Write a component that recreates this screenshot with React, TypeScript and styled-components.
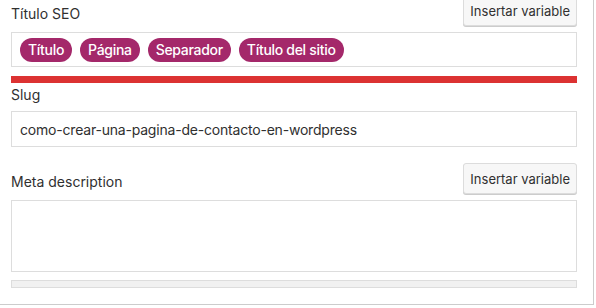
import React from "react";
import styled, { createGlobalStyle } from "styled-components";

const Global = createGlobalStyle`
  html, body { margin: 0; padding: 0; background: #fff; }
  body { font-family: Inter, "Open Sans", "Liberation Sans", sans-serif; color: #303030; }
  * { box-sizing: border-box; }
`;

const Panel = styled.div`
  width: 594px;
  height: 310px;
  margin-top: -5px;
  padding: 0 16px 0 11px;
  border-right: 1px solid #ccc;
  border-bottom: 1px solid #ccc;
  display: flex;
  flex-direction: column;
`;

const FieldHeader = styled.div<{ $gap?: number }>`
  display: flex;
  align-items: center;
  justify-content: space-between;
  margin-top: ${(p) => p.$gap ?? 0}px;
`;

const Label = styled.label`
  font-size: 14px;
  line-height: 20px;
  padding-top: 6px;
  color: #303030;
`;

const VarButton = styled.button`
  height: 31px;
  padding: 0 6px;
  font-family: inherit;
  font-size: 13px;
  color: #303030;
  background: #f7f7f7;
  border: 1px solid #dcdcdc;
  border-radius: 3px;
  box-shadow: 0 1px 0 #ccc;
`;

const TagBox = styled.div`
  margin-top: 6px;
  height: 35px;
  border: 1px solid #ddd;
  padding: 5px 8px;
  display: flex;
  gap: 8px;
  align-items: center;
`;

const Pill = styled.span`
  height: 24px;
  line-height: 24px;
  padding: 0 8px;
  border-radius: 12px;
  background: #a4286a;
  color: #fff;
  font-size: 14px;
  font-weight: 500;
  letter-spacing: -0.3px;
`;

const Bar = styled.div<{ $color: string; $border: string; $gap: number; $h: number }>`
  margin-top: ${(p) => p.$gap}px;
  height: ${(p) => p.$h}px;
  background: ${(p) => p.$color};
  border: 1px solid ${(p) => p.$border};
`;

const TextInput = styled.div`
  height: 36px;
  border: 1px solid #ddd;
  padding: 0 8px;
  display: flex;
  align-items: center;
  font-size: 14px;
  letter-spacing: -0.2px;
  color: #303030;
`;

const SlugLabel = styled(Label)`
  margin-top: 2px;
  padding-top: 0;
  margin-bottom: 6px;
`;

const TextArea = styled.div`
  margin-top: 6px;
  height: 72px;
  border: 1px solid #ddd;
`;

export default function App() {
  return (
    <>
      <Global />
      <Panel>
        <FieldHeader>
          <Label>Título SEO</Label>
          <VarButton>Insertar variable</VarButton>
        </FieldHeader>
        <TagBox>
          <Pill>Título</Pill>
          <Pill>Página</Pill>
          <Pill>Separador</Pill>
          <Pill>Título del sitio</Pill>
        </TagBox>
        <Bar $color="#dc3232" $border="#dc3232" $gap={9} $h={7} />
        <SlugLabel>Slug</SlugLabel>
        <TextInput>como-crear-una-pagina-de-contacto-en-wordpress</TextInput>
        <FieldHeader $gap={16}>
          <Label>Meta description</Label>
          <VarButton>Insertar variable</VarButton>
        </FieldHeader>
        <TextArea />
        <Bar $color="#f1f1f1" $border="#ddd" $gap={8} $h={8} />
      </Panel>
    </>
  );
}
